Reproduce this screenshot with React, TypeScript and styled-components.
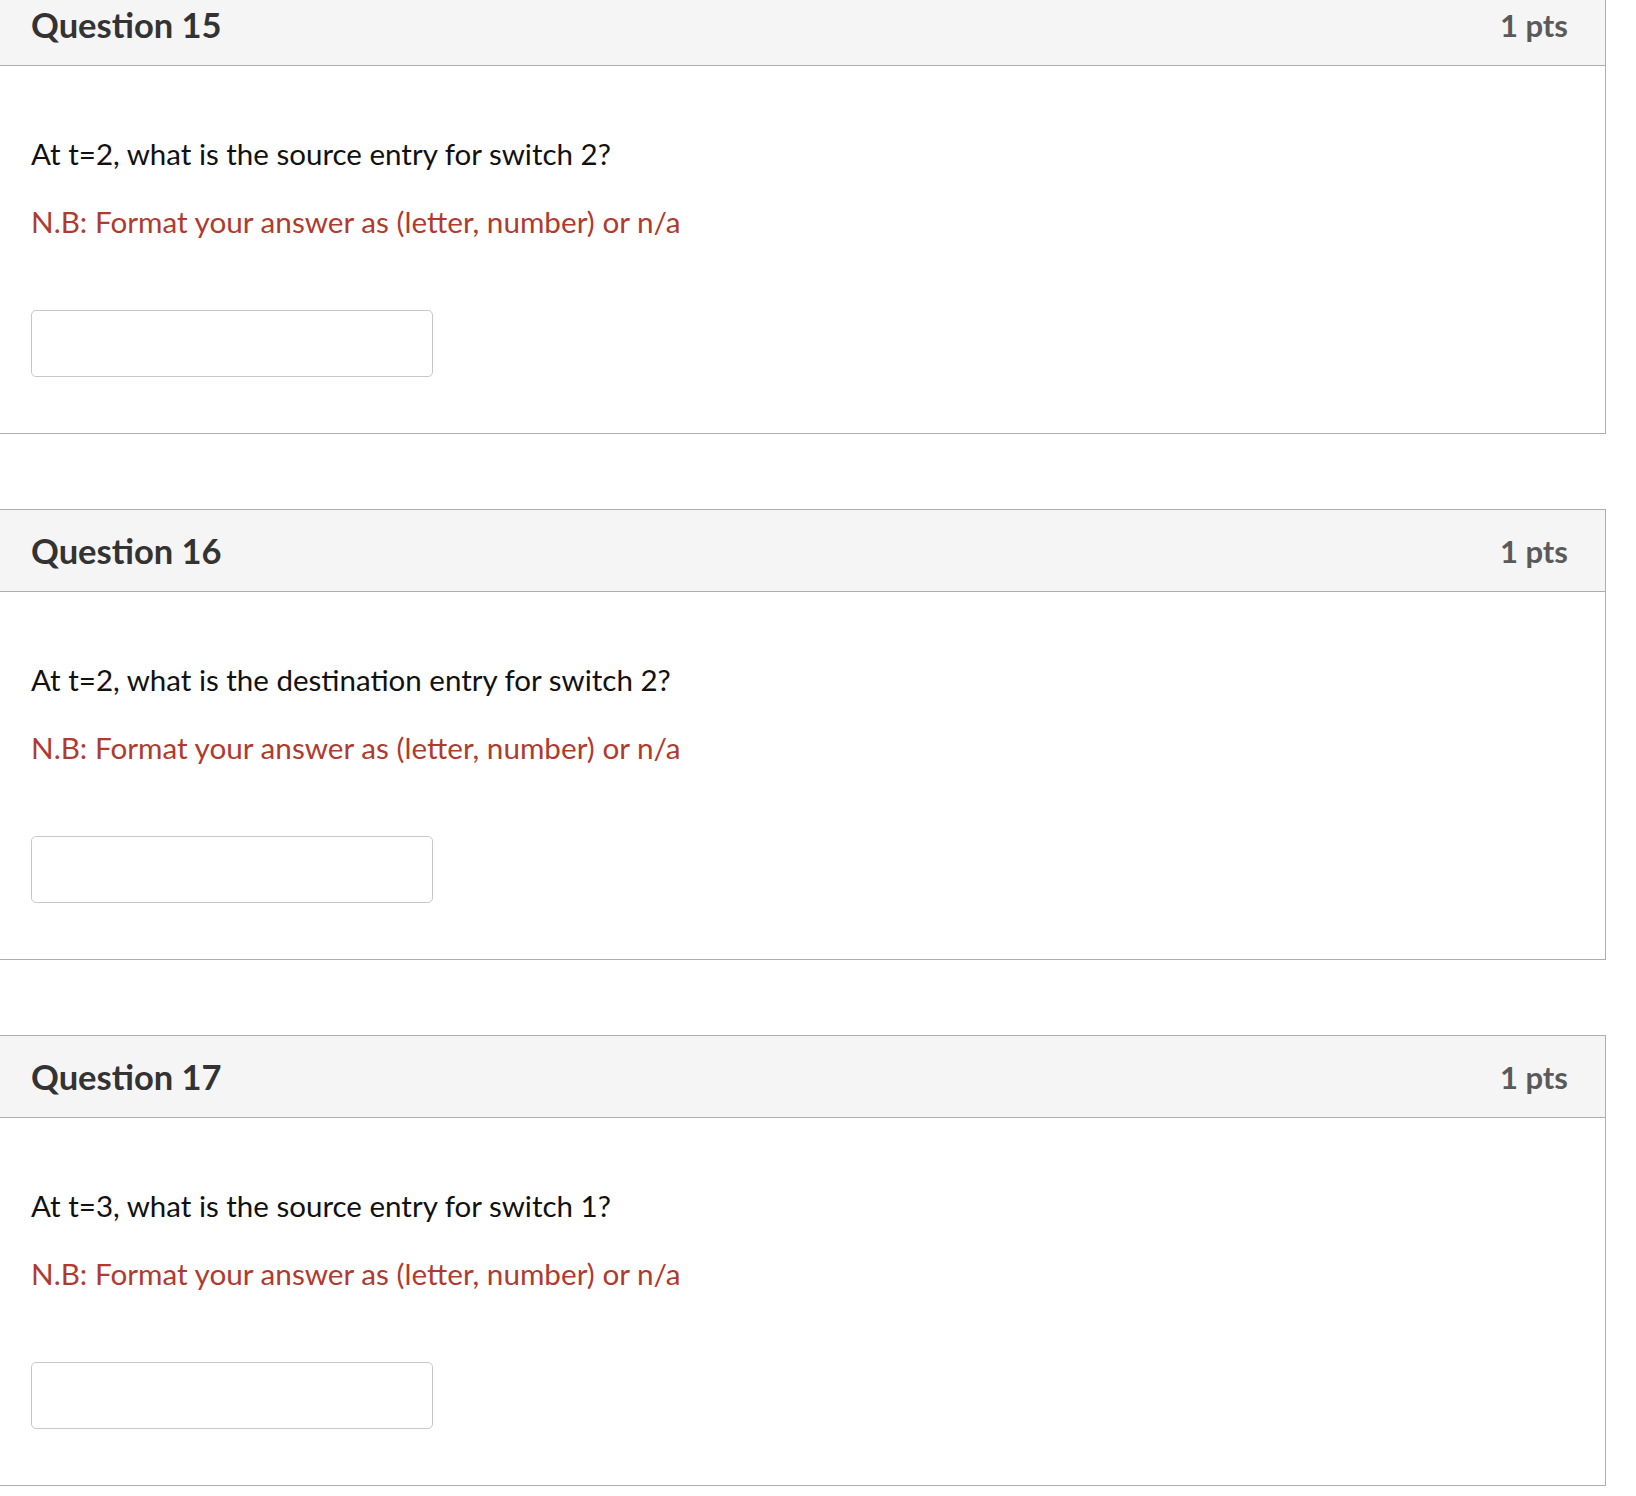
import styled, { createGlobalStyle } from 'styled-components';

const GlobalStyle = createGlobalStyle`
  html, body {
    margin: 0;
    padding: 0;
    background: #fff;
    font-family: Lato, "Noto Sans", sans-serif;
  }
`;

const Page = styled.div`
  margin-top: -17px;
  margin-left: -1px;
  display: flex;
  flex-direction: column;
  gap: 75px;
`;

const Card = styled.div`
  width: 1607px;
  box-sizing: border-box;
  border: 1px solid #aeaeae;
  background: #fff;
`;

const Header = styled.div`
  height: 82px;
  box-sizing: border-box;
  padding: 0 37px 0 31px;
  display: flex;
  align-items: center;
  justify-content: space-between;
  background: #f5f5f5;
  border-bottom: 1px solid #aeaeae;
`;

const Title = styled.h3`
  margin: 0;
  font-size: 34.5px;
  font-weight: 700;
  color: #333;
`;

const Points = styled.span`
  font-size: 31px;
  font-weight: 700;
  color: #5a5a5a;
`;

const Body = styled.div`
  padding: 71px 31px 56px;
  display: flex;
  flex-direction: column;
`;

const Prompt = styled.p`
  margin: 0;
  font-size: 29.5px;
  line-height: 34px;
  color: #111;
`;

const Note = styled.p`
  margin: 34px 0 0;
  font-size: 29.7px;
  line-height: 34px;
  color: #b13a2f;
`;

const Answer = styled.input`
  margin-top: 71px;
  width: 402px;
  height: 67px;
  box-sizing: border-box;
  border: 1px solid #c8c8c8;
  border-radius: 5px;
  background: #fff;
  font: inherit;
  font-size: 24px;
  padding: 0 12px;
`;

const questions = [
  { n: 15, text: 'At t=2, what is the source entry for switch 2?' },
  { n: 16, text: 'At t=2, what is the destination entry for switch 2?' },
  { n: 17, text: 'At t=3, what is the source entry for switch 1?' },
];

const App = () => (
  <>
    <GlobalStyle />
    <Page>
      {questions.map(q => (
        <Card key={q.n}>
          <Header>
            <Title>Question {q.n}</Title>
            <Points>1 pts</Points>
          </Header>
          <Body>
            <Prompt>{q.text}</Prompt>
            <Note>N.B: Format your answer as (letter, number) or n/a</Note>
            <Answer type="text" />
          </Body>
        </Card>
      ))}
    </Page>
  </>
);

export default App;
